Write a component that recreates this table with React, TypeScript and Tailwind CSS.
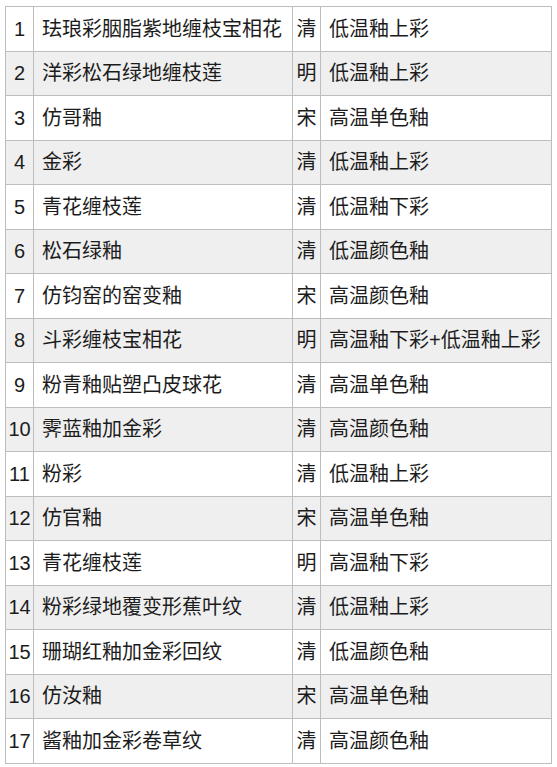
const rows: [string, string, string][] = [
  ['珐琅彩胭脂紫地缠枝宝相花', '清', '低温釉上彩'],
  ['洋彩松石绿地缠枝莲', '明', '低温釉上彩'],
  ['仿哥釉', '宋', '高温单色釉'],
  ['金彩', '清', '低温釉上彩'],
  ['青花缠枝莲', '清', '低温釉下彩'],
  ['松石绿釉', '清', '低温颜色釉'],
  ['仿钧窑的窑变釉', '宋', '高温颜色釉'],
  ['斗彩缠枝宝相花', '明', '高温釉下彩+低温釉上彩'],
  ['粉青釉贴塑凸皮球花', '清', '高温单色釉'],
  ['霁蓝釉加金彩', '清', '高温颜色釉'],
  ['粉彩', '清', '低温釉上彩'],
  ['仿官釉', '宋', '高温单色釉'],
  ['青花缠枝莲', '明', '高温釉下彩'],
  ['粉彩绿地覆变形蕉叶纹', '清', '低温釉上彩'],
  ['珊瑚红釉加金彩回纹', '清', '低温颜色釉'],
  ['仿汝釉', '宋', '高温单色釉'],
  ['酱釉加金彩卷草纹', '清', '高温颜色釉'],
];

export default function App() {
  return (
    <div className="bg-white w-[557px] h-[767px] pt-[6px] pl-[5px] font-['Liberation_Sans','Noto_Sans_CJK_SC',sans-serif] text-[20px] text-[#1c1c1c]">
      <div className="w-[547px] border-l border-t border-[#bdbdbd] grid grid-cols-[28px_259px_28px_231px]">
        {rows.map(([name, dynasty, kind], i) => (
          <div key={i} className={`contents ${i % 2 === 1 ? '[&>div]:bg-[#efefef]' : ''}`}>
            <div className="h-[44.5px] border-r border-b border-[#bdbdbd] flex items-center justify-center leading-none">
              {i + 1}
            </div>
            <div className="h-[44.5px] border-r border-b border-[#bdbdbd] flex items-center pl-[8px] leading-none whitespace-nowrap">
              {name}
            </div>
            <div className="h-[44.5px] border-r border-b border-[#bdbdbd] flex items-center justify-center leading-none">
              {dynasty}
            </div>
            <div className="h-[44.5px] border-r border-b border-[#bdbdbd] flex items-center pl-[8px] leading-none whitespace-nowrap">
              {kind}
            </div>
          </div>
        ))}
      </div>
    </div>
  );
}
